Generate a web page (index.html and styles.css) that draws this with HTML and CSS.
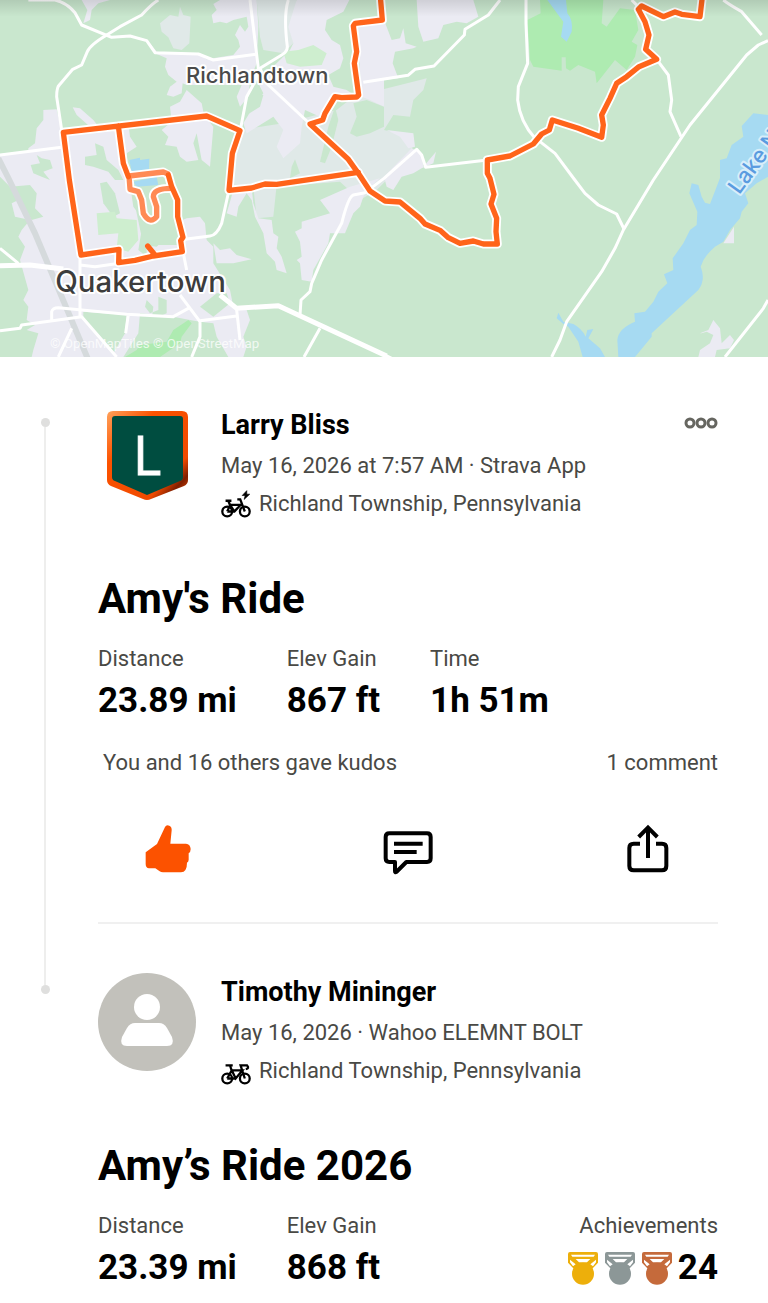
FILE: index.html
```html
<!DOCTYPE html>
<html lang="en">
<head>
    <meta charset="UTF-8">
    <meta name="viewport" content="width=device-width, initial-scale=1.0">
    <title>Group Activity</title>
    <link rel="stylesheet" href="styles.css">
</head>
<body>
    <!-- Route map -->
    <svg class="map" viewBox="0 0 2304 1071" role="img" aria-label="Route map">
        <defs>
            <linearGradient id="topShade" x1="0" y1="0" x2="0" y2="1">
                <stop offset="0" stop-color="#000" stop-opacity="0.12"/>
                <stop offset="1" stop-color="#000" stop-opacity="0"/>
            </linearGradient>
        </defs>
        <rect width="2304" height="1071" fill="#c9e7ce"/>

        <!-- Built-up land -->
        <g fill="#e0e9e8">
            <path d="M480,70 L510,45 L535,50 L540,20 L550,45 L572,50 L568,130 L545,150 L520,145 L505,112 L485,95Z"/>
            <path d="M770,0 H890 L890,40 L870,70 L880,130 L850,160 L790,150 L780,110Z"/>
            <path d="M720,390 L850,370 L1010,330 L1060,290 L1260,240 L1280,235 L1270,270 L1240,300 L1230,350 L1180,345 L1152,390 L1240,410 L1235,460 L1200,500 L1130,570 L1080,600 L1020,545 L690,570 L700,470Z"/>
            <path d="M760,560 L830,555 L820,650 L770,655Z"/>
        </g>
        <g fill="#ebebf3">
            <path d="M245,0 H330 L295,10 L275,30 L270,60 L250,70 L262,30Z"/>
            <path d="M660,0 H770 L775,80 L770,190 L750,240 L745,290 L720,320 L710,290 L725,255 L560,255 L548,250 L545,280 L520,290 L500,285 L510,260 L530,245 L505,225 L495,200 L500,175 L465,160 L450,130 L470,155 L560,165 L600,160 L620,178 L700,165 L720,140 L715,120 L705,105 L720,75 L735,95 L745,80 L740,50 L700,60 L680,70 L660,65 L640,70 L635,45 L650,30 L640,12Z"/>
            <path d="M890,0 H1048 L1030,35 L980,60 L975,90 L995,120 L1020,135 L1030,175 L1020,205 L985,225 L1000,260 L1040,270 L1070,290 L1000,300 L985,330 L960,350 L915,330 L905,380 L900,430 L850,475 L830,440 L850,390 L820,350 L740,400 L730,370 L760,320 L790,280 L770,240 L830,190 L870,150 L880,130 L865,80Z"/>
            <path d="M1070,75 L1125,60 L1152,60 L1175,120 L1200,115 L1210,85 L1217,130 L1250,140 L1240,145 L1185,155 L1178,190 L1195,235 L1152,240 L1152,320 L1110,300 L1085,290Z"/>
            <path d="M1250,0 H1420 L1435,50 L1400,70 L1370,65 L1330,75 L1315,115 L1270,125 L1255,80Z"/>
            <path d="M485,390 L515,365 L510,320 L540,305 L560,270 L605,310 L612,345 L640,380 L630,500 L605,480 L590,400 L580,430 L595,480 L560,485 L540,470 L530,440 L495,435 L505,410Z"/>
            <path d="M85,445 L105,430 L110,385 L130,360 L130,330 L170,328 L185,395 L275,385 L230,345 L218,322 L240,325 L280,360 L300,385 L355,378 L385,370 L390,410 L410,440 L380,460 L385,520 L400,620 L430,660 L415,750 L440,770 L440,735 L540,735 L548,660 L560,655 L600,650 L615,670 L620,720 L640,740 L640,790 L690,870 L700,920 L740,930 L750,960 L730,1010 L740,1040 L730,1071 H685 L650,1010 L640,970 L600,965 L570,960 L520,950 L420,940 L415,1000 L370,1071 H95 L100,1050 L115,1000 L80,990 L105,975 L80,960 L85,920 L70,900 L85,870 L60,780 L75,740 L55,710 L65,690 L90,660 L45,650 L35,610 L55,600 L30,560 L0,530 V465 L85,455Z"/>
            <path d="M1050,560 L1140,535 L1095,575 L1080,620 L1060,640 L1035,700 L990,700 L985,730 L940,810 L935,845 L905,840 L900,790 L890,780 L905,770 L900,725 L885,695 L905,685 L905,665 L990,640 L960,600Z"/>
            <path d="M700,570 L755,565 L760,610 L775,655 L815,660 L820,700 L835,710 L830,745 L845,770 L860,820 L830,810 L825,785 L800,760 L790,700 L765,650 L755,600 L740,580 L715,620 L710,650 L680,640Z"/>
            <path d="M1152,530 L1235,445 L1265,460 L1270,500 L1308,455 L1300,490 L1265,505 L1240,520 L1205,530 L1180,570 L1160,560Z"/>
            <path d="M1160,390 L1240,400 L1245,440 L1225,445 L1200,410Z"/>
            <path d="M640,730 L660,750 L690,745 L710,765 L755,778 L700,790 L650,790Z"/>
            <path d="M2100,1000 L2125,990 L2140,960 L2160,985 L2165,1030 L2190,1005 L2202,1020 L2190,1045 L2150,1050 L2145,1071 H2095 L2100,1050 L2130,1030 L2140,1005 L2120,995 L2105,1000Z"/>
            <path d="M2170,730 L2202,680 L2202,730Z"/>
        </g>

        <!-- Woods inside the built-up land -->
        <g fill="#c9e7ce">
            <path d="M255,470 L290,465 L285,430 L310,440 L320,480 L355,510 L370,540 L345,540 L325,515 L280,500 L255,495Z"/>
            <path d="M92,495 L120,490 L110,465 L125,475 L150,480 L158,505 L130,515 L150,540 L125,530 L100,520Z"/>
            <path d="M300,550 L320,545 L345,580 L360,640 L340,650 L310,610Z"/>
            <path d="M390,530 L500,530 L530,600 L540,700 L500,710 L470,740 L430,735 L410,640Z"/>
            <path d="M440,900 L460,920 L455,960 L500,940 L500,900 L475,890 L475,930 L450,940 L435,920Z"/>
            <path d="M250,935 L380,945 L375,1000 L340,1060 L250,960Z"/>
            <path d="M30,560 L90,555 L110,580 L105,625 L130,650 L95,660 L60,600Z"/>
            <path d="M735,310 L760,280 L790,285 L780,320 L740,345Z"/>
            <path d="M875,500 L885,478 L900,520 L870,535Z"/>
            <path d="M960,485 L985,380 L1005,320 L1015,360 L995,440 L975,490Z"/>
            <path d="M1050,400 L1070,350 L1060,310 L1100,300 L1152,320 L1152,380 L1110,400 L1070,410Z"/>
            <path d="M600,920 L650,880 L680,880 L690,910 L640,950Z"/>
        </g>

        <!-- Parks -->
        <g fill="#ceeecf">
            <path d="M290,640 L345,635 L350,655 L410,660 L415,720 L385,755 L350,745 L355,700 L295,705Z"/>
            <path d="M850,155 L895,150 L940,135 L980,160 L965,195 L900,200 L860,190Z"/>
        </g>
        <g fill="#aeebb1">
            <path d="M1620,0 H1810 L1805,70 L1820,80 L1860,25 L1905,30 L1915,90 L1895,125 L1912,135 L1905,170 L1880,210 L1845,180 L1790,250 L1785,215 L1735,195 L1710,212 L1698,205 L1697,172 L1685,172 L1685,212 L1600,200 L1590,180 L1582,60 L1622,40Z"/>
            <path d="M375,1071 L410,1050 L420,1035 L500,1025 L520,990 L565,960 L575,970 L545,1010 L540,1030 L480,1071Z"/>
        </g>

        <!-- Water -->
        <g fill="#a6daf2">
            <path d="M2304,345 L2260,340 L2225,378 L2230,410 L2195,435 L2180,475 L2160,480 L2160,534 L2130,612 L2115,608 L2105,590 L2095,555 L2075,550 L2068,580 L2092,635 L2090,675 L2070,690 L2050,730 L2018,775 L2020,810 L1992,823 L2002,850 L1975,875 L1960,905 L1935,935 L1903,940 L1905,965 Q1855,985 1852,1020 L1855,1071 H1905 L1955,1010 L1955,1000 L2095,870 Q2118,840 2102,800 Q2110,770 2145,740 L2170,725 L2190,690 L2220,655 L2225,635 L2245,610 L2235,580 L2270,550 L2304,530Z"/>
            <path d="M1675,938 L1690,965 L1720,972 Q1745,985 1757,1010 L1762,990 L1780,987 L1765,1015 L1800,1045 L1815,1071 H1748 L1735,1025 L1705,980 L1690,972 L1670,955Z"/>
            <path d="M1642,0 H1698 L1702,40 Q1720,60 1715,95 L1700,125 L1683,110 L1690,65 L1670,38Z"/>
            <path d="M388,480 L420,473 L420,480 L448,476 L447,508 L395,515Z"/>
            <path d="M400,545 L470,530 L475,555 L410,560Z"/>
        </g>

        <!-- Roads -->
        <path class="road-grey" d="M-5,475 L25,534 L105,700 L265,1080"/>
        <g class="roads">
            <path d="M85,0 L165,0 Q200,8 225,38 L245,75 L335,112 L390,108 L440,122 L465,158 L595,162 L640,180 L768,163"/>
            <path d="M475,0 Q455,12 425,45 L360,80 L320,105 Q270,135 262,155 L245,195 L218,208 L178,255 Q170,262 170,290 L185,390"/>
            <path d="M0,465 L185,442"/>
            <path d="M750,0 L775,205 L765,245 L740,290 L722,385"/>
            <path d="M865,0 Q850,45 862,140 Q862,155 845,165 L780,205 L800,250 L930,372"/>
            <path d="M1090,247 L1224,226 L1245,208 L1302,198 L1393,105 L1395,88 L1465,45 L1500,0"/>
            <path d="M1578,0 L1578,70 L1583,190 L1555,260 L1553,300 Q1560,365 1605,415 L1620,425 L1665,460 L1720,534 L1755,580 L1795,615 L1850,642 L1872,687"/>
            <path d="M1895,0 L1915,20 M1970,178 L2005,225 L2015,300 L2010,335 L2043,410"/>
            <path d="M2170,0 Q2185,12 2225,35 L2285,105"/>
            <path d="M2304,122 L2275,135 L2240,165 L2070,375 L1960,540 L1870,690 L1845,745 L1805,815 L1700,965 L1680,1020 L1655,1071"/>
            <path d="M1462,480 L1277,502 L1265,465 L1250,448 L1152,535 L1095,578 L1060,585 Q1045,590 1025,670 L965,780 L935,850 L930,875 L903,900 L900,945"/>
            <path d="M687,570 L665,670 Q650,706 630,708 L555,718"/>
            <path d="M0,745 L55,790 M240,765 V950 M240,795 L285,800 L380,787 M550,760 L560,810"/>
            <path d="M155,960 L155,935 Q158,923 175,923 L380,943 L520,950 L565,925 M540,885 L600,965 L600,1010 L575,1071 M600,962 L710,948 M710,930 L720,1020 M385,943 L377,1000"/>
            <path d="M0,992 L60,985 L65,975 L245,950 L350,1071 M215,985 L175,1071 M960,985 L912,1071"/>
            <path d="M2304,900 L2290,925 L2175,1071 M1145,1060 L1175,1075"/>
        </g>
        <path class="road-main" d="M0,797 L90,795 L190,807 M660,885 L710,925 L835,917 L1160,1068"/>

        <!-- Place names -->
        <text class="place" x="558" y="248">Richlandtown</text>
        <text class="place place-large" x="166" y="876">Quakertown</text>
        <text class="place place-water" x="2218" y="586" transform="rotate(-54 2218 586)">Lake N</text>
        <text class="attribution" x="150" y="1043">© OpenMapTiles © OpenStreetMap</text>

        <!-- Ride -->
        <g class="route">
            <path class="route-halo" d="M1141,-10 L1147,60 L1065,70 L1060,78 L1070,155 L1063,190 L1076,285 L1070,291 L1025,293 L1005,290 L975,340 L968,360 L930,372 L1045,478 L1075,520 L1110,573 L1155,603 L1200,606 L1260,655 L1275,672 L1320,691 L1345,713 L1380,730 L1420,723 L1450,732 L1492,732 L1488,695 L1490,655 L1473,612 L1482,583 L1470,535 L1462,520 L1462,480 L1530,468 L1600,432 L1625,402 L1648,390 L1657,360 L1735,385 L1805,412 L1810,375 L1805,345 L1830,295 L1850,250 L1880,230 L1917,200 L1970,178 L1937,148 L1947,105 L1935,65 L1915,28 L1925,18 L1990,50 L2025,36 L2045,43 L2100,50 L2107,-10"/>
            <path class="route-halo" d="M1075,517 L830,553 L795,552 L755,564 L687,571 L697,460 L720,392 L620,348 L190,397 L208,540 L243,765 L357,748 L356,788 L405,781 L460,768 L547,755 L542,722 L549,712 L533,650 L533,600 L515,560 L505,525 L490,516 L387,528 M355,378 L370,490 L387,530 L390,568 L415,575 L425,600 L430,640 Q450,675 470,650 L470,620 L460,590 Q460,565 515,565"/>
            <path class="route-line" d="M1141,-10 L1147,60 L1065,70 L1060,78 L1070,155 L1063,190 L1076,285 L1070,291 L1025,293 L1005,290 L975,340 L968,360 L930,372 L1045,478 L1075,520 L1110,573 L1155,603 L1200,606 L1260,655 L1275,672 L1320,691 L1345,713 L1380,730 L1420,723 L1450,732 L1492,732 L1488,695 L1490,655 L1473,612 L1482,583 L1470,535 L1462,520 L1462,480 L1530,468 L1600,432 L1625,402 L1648,390 L1657,360 L1735,385 L1805,412 L1810,375 L1805,345 L1830,295 L1850,250 L1880,230 L1917,200 L1970,178 L1937,148 L1947,105 L1935,65 L1915,28 L1925,18 L1990,50 L2025,36 L2045,43 L2100,50 L2107,-10"/>
            <path class="route-line route-light" d="M503,521 L490,516 L387,528 L390,568 L415,575 L425,600 L430,640 Q450,675 470,650 L470,620 L460,590 Q460,565 515,565"/>
            <path class="route-line" d="M1075,517 L830,553 L795,552 L755,564 L687,571 L697,460 L720,392 L620,348 L190,397 L208,540 L243,765 L357,748 L356,788 L405,781 L460,768 L547,755 L542,722 L549,712 L533,650 L533,600 L515,560 L505,525 M355,378 L370,490 L385,530 M443,738 L465,765"/>
        </g>
        <rect width="2304" height="50" fill="url(#topShade)"/>
    </svg>

    <main class="feed">
        <article class="entry">
            <div class="rail">
                <span class="rail-lead"></span>
                <span class="rail-dot"></span>
                <span class="rail-line"></span>
            </div>
            <div class="entry-body">
                <header class="entry-header">
                    <svg class="avatar" viewBox="0 0 98 98" role="img" aria-label="Larry Bliss">
                        <defs>
                            <linearGradient id="shield" x1="0" y1="0" x2="1" y2="1">
                                <stop offset="0" stop-color="#ffa25c"/>
                                <stop offset="0.3" stop-color="#fc5200"/>
                                <stop offset="0.75" stop-color="#f04a00"/>
                                <stop offset="0.86" stop-color="#7e1e00"/>
                                <stop offset="1" stop-color="#fc5200"/>
                            </linearGradient>
                        </defs>
                        <path fill="url(#shield)" d="M15,5 H84 Q90,5 90,11 V74 Q90,78 86,80 L53,93 Q49,95 45,93 L13,80 Q9,78 9,74 V11 Q9,5 15,5Z"/>
                        <path fill="#004d40" d="M17,10 H82 Q85,10 85,13 V71 Q85,74 82,75 L49,89 L17,75 Q14,74 14,71 V13 Q14,10 17,10Z"/>
                        <text class="avatar-letter" x="49" y="69" text-anchor="middle">L</text>
                    </svg>
                    <div class="entry-info">
                        <h3 class="athlete">Larry Bliss</h3>
                        <p class="meta">May 16, 2026 at 7:57 AM · Strava App</p>
                        <p class="meta">
                            <svg class="bike" viewBox="0 0 92 84" fill="none" stroke="#000" stroke-width="7" aria-hidden="true">
                                <circle cx="19" cy="65" r="15"/>
                                <circle cx="73" cy="65" r="15"/>
                                <path d="M19,65 H41 L60,45 H28 L41,65 M19,65 L28,45 L22,32 M14,32 H32 M73,65 L59,28 H50 M41,65 L50,55"/>
                                <path d="M79,1 L65,16 H74 L71,28 L88,12 H79Z" fill="#000" stroke-width="2"/>
                            </svg>
                            Richland Township, Pennsylvania
                        </p>
                    </div>
                    <button class="more" type="button" aria-label="More options">
                        <svg viewBox="0 0 34 12" fill="none" stroke="#666660" stroke-width="3">
                            <circle cx="6" cy="6" r="4"/>
                            <circle cx="17" cy="6" r="4"/>
                            <circle cx="28" cy="6" r="4"/>
                        </svg>
                    </button>
                </header>

                <h2 class="title">Amy's Ride</h2>
                <dl class="stats">
                    <div class="stat"><dt>Distance</dt><dd>23.89 mi</dd></div>
                    <div class="stat"><dt>Elev Gain</dt><dd>867 ft</dd></div>
                    <div class="stat"><dt>Time</dt><dd>1h 51m</dd></div>
                </dl>

                <div class="social">
                    <span>You and 16 others gave kudos</span>
                    <span>1 comment</span>
                </div>
                <div class="actions">
                    <button class="action" type="button" aria-label="Kudos">
                        <svg viewBox="0 0 156 156" fill="#fc5200">
                            <path d="M69,12 Q73,4 82,8 Q90,12 89,22 L85,62 H132 Q145,63 146,78 Q146,87 140,91 V110 Q140,116 135,119 Q135,147 117,148 H63 Q57,148 53,145 L40,136 H21 Q11,135 11,123 V88 L45,63Z"/>
                        </svg>
                    </button>
                    <button class="action" type="button" aria-label="Comment">
                        <svg viewBox="0 0 156 156" fill="none" stroke="#000" stroke-width="12">
                            <path d="M22,31 H135 Q146,31 146,42 V106 Q146,117 135,117 H73 L43,147 Q39,150 39,144 V117 H22 Q11,117 11,106 V42 Q11,31 22,31Z" stroke-linejoin="round"/>
                            <path d="M36,62 H122 M36,87 H104"/>
                        </svg>
                    </button>
                    <button class="action" type="button" aria-label="Share">
                        <svg viewBox="0 0 156 156" fill="none" stroke="#000" stroke-width="12">
                            <path d="M54,62 H35 Q22,62 22,75 V129 Q22,142 35,142 H120 Q133,142 133,129 V75 Q133,62 120,62 H102"/>
                            <path d="M78,105 V16 M50,42 L78,14 L106,42"/>
                        </svg>
                    </button>
                </div>
            </div>
        </article>

        <article class="entry">
            <div class="rail">
                <span class="rail-lead"></span>
                <span class="rail-dot"></span>
            </div>
            <div class="entry-body">
                <header class="entry-header">
                    <svg class="avatar" viewBox="0 0 98 98" role="img" aria-label="Timothy Mininger">
                        <circle cx="49" cy="49" r="49" fill="#c2c1bb"/>
                        <circle cx="49" cy="34" r="13" fill="#fff"/>
                        <path fill="#fff" d="M37,50 H61 Q66,50 69,55 L74,64 Q77,73 69,73 H29 Q21,73 24,64 L29,55 Q32,50 37,50Z"/>
                    </svg>
                    <div class="entry-info">
                        <h3 class="athlete">Timothy Mininger</h3>
                        <p class="meta">May 16, 2026 · Wahoo ELEMNT BOLT</p>
                        <p class="meta">
                            <svg class="bike" viewBox="0 0 92 84" fill="none" stroke="#000" stroke-width="7" aria-hidden="true">
                                <circle cx="19" cy="65" r="15"/>
                                <circle cx="73" cy="65" r="15"/>
                                <path d="M19,65 L33,40 L45,65 L66,40 H31 M19,65 H45 M33,42 L28,26 M14,25 H36 M73,65 L60,25 H80 Q88,34 76,36"/>
                            </svg>
                            Richland Township, Pennsylvania
                        </p>
                    </div>
                </header>

                <h2 class="title">Amy’s Ride 2026</h2>
                <dl class="stats">
                    <div class="stat"><dt>Distance</dt><dd>23.39 mi</dd></div>
                    <div class="stat"><dt>Elev Gain</dt><dd>868 ft</dd></div>
                    <div class="stat stat-right">
                        <dt>Achievements</dt>
                        <dd class="medals">
                            <svg class="medal gold" viewBox="0 0 96 102" aria-hidden="true">
                                <path d="M3,9 Q3,3 9,3 H87 Q93,3 93,9 V35 L75,54 H21 L3,35Z M12,11 L16,17 H80 L84,11Z M9,26 V34 L18,46 L26,40Z M87,26 V34 L78,46 L70,40Z M26,24 L36,34 H60 L70,24Z"/>
                                <circle cx="48" cy="68" r="33"/>
                            </svg>
                            <svg class="medal silver" viewBox="0 0 96 102" aria-hidden="true">
                                <path d="M3,9 Q3,3 9,3 H87 Q93,3 93,9 V35 L75,54 H21 L3,35Z M12,11 L16,17 H80 L84,11Z M9,26 V34 L18,46 L26,40Z M87,26 V34 L78,46 L70,40Z M26,24 L36,34 H60 L70,24Z"/>
                                <circle cx="48" cy="68" r="33"/>
                            </svg>
                            <svg class="medal bronze" viewBox="0 0 96 102" aria-hidden="true">
                                <path d="M3,9 Q3,3 9,3 H87 Q93,3 93,9 V35 L75,54 H21 L3,35Z M12,11 L16,17 H80 L84,11Z M9,26 V34 L18,46 L26,40Z M87,26 V34 L78,46 L70,40Z M26,24 L36,34 H60 L70,24Z"/>
                                <circle cx="48" cy="68" r="33"/>
                            </svg>
                            24
                        </dd>
                    </div>
                </dl>
            </div>
        </article>
    </main>
</body>
</html>
```
FILE: styles.css
```css
* {
    box-sizing: border-box;
}

body {
    margin: 0;
    font-family: Roboto, "Liberation Sans", sans-serif;
    background: #fff;
    color: #000;
}

h2, h3, p, dl, dd {
    margin: 0;
}

button {
    padding: 0;
    border: 0;
    background: none;
    cursor: pointer;
}

/* Map */
.map {
    display: block;
    width: 100%;
}

.roads path {
    fill: none;
    stroke: #fff;
    stroke-width: 9;
    stroke-linejoin: round;
}

.road-main {
    fill: none;
    stroke: #fff;
    stroke-width: 15;
    stroke-linejoin: round;
}

.road-grey {
    fill: none;
    stroke: #d5dadc;
    stroke-width: 18;
}

.route path {
    fill: none;
    stroke-linejoin: round;
    stroke-linecap: round;
}

.route .route-halo {
    stroke: #fff;
    stroke-width: 27;
}

.route .route-line {
    stroke: #ff641a;
    stroke-width: 16;
}

.route .route-light {
    stroke: #ff8a54;
}

.place {
    font-family: Inter, Roboto, sans-serif;
    font-size: 66px;
    font-weight: 500;
    fill: #4a4a4a;
    stroke: #fff;
    stroke-width: 12;
    stroke-linejoin: round;
    paint-order: stroke;
}

.place-large {
    font-size: 88px;
    fill: #3c3c3c;
}

.place-water {
    fill: #5a9be0;
    stroke: #d8eefa;
}

.attribution {
    font-size: 40px;
    fill: #fff;
    fill-opacity: 0.75;
}

/* Feed */
.entry {
    display: flex;
    padding-right: 50px;
}

.rail {
    display: flex;
    flex-direction: column;
    align-items: center;
    flex: none;
    width: 90px;
}

.rail-lead,
.rail-line {
    width: 2px;
    background: #eeeeed;
}

.rail-lead {
    height: 61px;
}

.entry:first-child .rail-lead {
    background: none;
}

.rail-dot {
    width: 9px;
    height: 9px;
    border-radius: 50%;
    background: #dfdfde;
}

.rail-line {
    flex: 1;
}

.entry-body {
    flex: 1;
    min-width: 0;
    margin-left: 8px;
    padding-top: 49px;
    border-bottom: 2px solid #f0f0f0;
}

.entry:last-child .entry-body {
    border-bottom: 0;
}

.entry-header {
    display: flex;
    align-items: flex-start;
}

.avatar {
    flex: none;
    width: 98px;
    height: 98px;
    margin-right: 25px;
}

.avatar-letter {
    font-family: "Open Sans", sans-serif;
    font-size: 54px;
    fill: #fff;
    stroke: #fff;
}

.entry-info {
    flex: 1;
}

.athlete {
    font-size: 27px;
    line-height: 38px;
    margin-bottom: 3px;
}

.meta {
    display: flex;
    align-items: center;
    gap: 8px;
    font-size: 22px;
    line-height: 38px;
    color: #494945;
}

.bike {
    width: 30px;
    height: 28px;
}

.more {
    display: flex;
    margin-top: 11px;
}

.more svg {
    width: 34px;
    height: 12px;
}

.title {
    margin-top: 50px;
    font-size: 42px;
    line-height: 52px;
}

.stats {
    display: flex;
    gap: 50px;
    margin-top: 18px;
}

.stat dt {
    font-size: 22px;
    line-height: 32px;
    color: #494945;
}

.stat dd {
    margin-top: 4px;
    font-size: 35px;
    font-weight: 700;
    line-height: 44px;
}

.stat-right {
    margin-left: auto;
    text-align: right;
}

.medals {
    display: flex;
    align-items: center;
    justify-content: flex-end;
    gap: 5px;
}

.medal {
    width: 32px;
    height: 34px;
    fill: currentColor;
    fill-rule: evenodd;
}

.gold {
    color: #edaf0b;
}

.silver {
    color: #8c9797;
}

.bronze {
    color: #c56a3b;
}

.social {
    display: flex;
    justify-content: space-between;
    margin-top: 24px;
    padding-left: 5px;
    font-size: 22px;
    line-height: 32px;
    color: #494945;
}

.actions {
    display: flex;
    justify-content: space-between;
    padding: 44px 0 47px;
}

.action {
    display: flex;
    justify-content: center;
    width: 140px;
}

.action svg {
    width: 52px;
    height: 52px;
}
```
